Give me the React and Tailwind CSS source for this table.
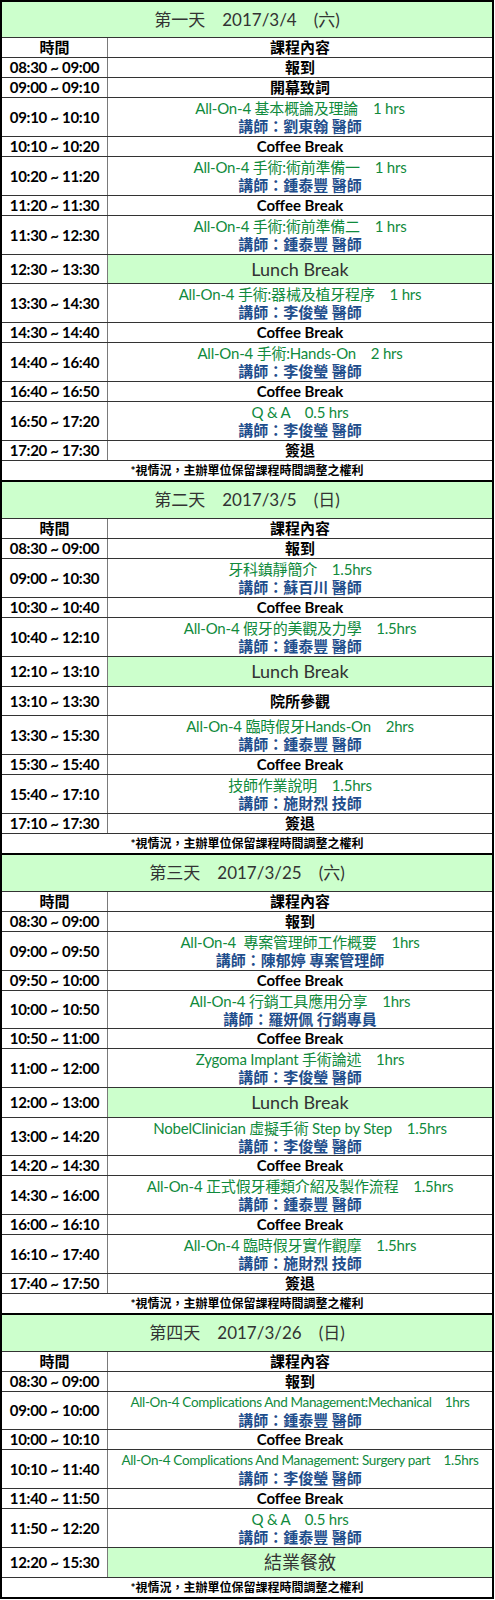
import React from 'react';

const FONT = { fontFamily: 'Lato, "Noto Sans CJK TC", sans-serif' };

const days = [
  {
    title: '第一天　2017/3/4　(六)',
    rows: [
      { time: '08:30 ~ 09:00', kind: 'plain', text: '報到' },
      { time: '09:00 ~ 09:10', kind: 'plain', text: '開幕致詞' },
      { time: '09:10 ~ 10:10', kind: 'course', text: 'All-On-4 基本概論及理論　1 hrs', speaker: '講師：劉東翰 醫師' },
      { time: '10:10 ~ 10:20', kind: 'plain', text: 'Coffee Break' },
      { time: '10:20 ~ 11:20', kind: 'course', text: 'All-On-4 手術:術前準備一　1 hrs', speaker: '講師：鍾泰豐 醫師' },
      { time: '11:20 ~ 11:30', kind: 'plain', text: 'Coffee Break' },
      { time: '11:30 ~ 12:30', kind: 'course', text: 'All-On-4 手術:術前準備二　1 hrs', speaker: '講師：鍾泰豐 醫師' },
      { time: '12:30 ~ 13:30', kind: 'lunch', text: 'Lunch Break', short: true },
      { time: '13:30 ~ 14:30', kind: 'course', text: 'All-On-4 手術:器械及植牙程序　1 hrs', speaker: '講師：李俊瑩 醫師' },
      { time: '14:30 ~ 14:40', kind: 'plain', text: 'Coffee Break' },
      { time: '14:40 ~ 16:40', kind: 'course', text: 'All-On-4 手術:Hands-On　2 hrs', speaker: '講師：李俊瑩 醫師' },
      { time: '16:40 ~ 16:50', kind: 'plain', text: 'Coffee Break' },
      { time: '16:50 ~ 17:20', kind: 'course', text: 'Q & A　0.5 hrs', speaker: '講師：李俊瑩 醫師' },
      { time: '17:20 ~ 17:30', kind: 'plain', text: '簽退' },
    ],
  },
  {
    title: '第二天　2017/3/5　(日)',
    rows: [
      { time: '08:30 ~ 09:00', kind: 'plain', text: '報到' },
      { time: '09:00 ~ 10:30', kind: 'course', text: '牙科鎮靜簡介　1.5hrs', speaker: '講師：蘇百川 醫師' },
      { time: '10:30 ~ 10:40', kind: 'plain', text: 'Coffee Break' },
      { time: '10:40 ~ 12:10', kind: 'course', text: 'All-On-4 假牙的美觀及力學　1.5hrs', speaker: '講師：鍾泰豐 醫師' },
      { time: '12:10 ~ 13:10', kind: 'lunch', text: 'Lunch Break' },
      { time: '13:10 ~ 13:30', kind: 'plain', text: '院所參觀', tall: true },
      { time: '13:30 ~ 15:30', kind: 'course', text: 'All-On-4 臨時假牙Hands-On　2hrs', speaker: '講師：鍾泰豐 醫師' },
      { time: '15:30 ~ 15:40', kind: 'plain', text: 'Coffee Break' },
      { time: '15:40 ~ 17:10', kind: 'course', text: '技師作業說明　1.5hrs', speaker: '講師：施財烈 技師' },
      { time: '17:10 ~ 17:30', kind: 'plain', text: '簽退' },
    ],
  },
  {
    title: '第三天　2017/3/25　(六)',
    rows: [
      { time: '08:30 ~ 09:00', kind: 'plain', text: '報到' },
      { time: '09:00 ~ 09:50', kind: 'course', text: 'All-On-4  專案管理師工作概要　1hrs', speaker: '講師：陳郁婷 專案管理師' },
      { time: '09:50 ~ 10:00', kind: 'plain', text: 'Coffee Break' },
      { time: '10:00 ~ 10:50', kind: 'course', short: true, text: 'All-On-4 行銷工具應用分享　1hrs', speaker: '講師：羅妍佩 行銷專員' },
      { time: '10:50 ~ 11:00', kind: 'plain', text: 'Coffee Break' },
      { time: '11:00 ~ 12:00', kind: 'course', text: 'Zygoma Implant 手術論述　1hrs', speaker: '講師：李俊瑩 醫師' },
      { time: '12:00 ~ 13:00', kind: 'lunch', text: 'Lunch Break' },
      { time: '13:00 ~ 14:20', kind: 'course', short: true, text: 'NobelClinician 虛擬手術 Step by Step　1.5hrs', speaker: '講師：李俊瑩 醫師' },
      { time: '14:20 ~ 14:30', kind: 'plain', text: 'Coffee Break' },
      { time: '14:30 ~ 16:00', kind: 'course', text: 'All-On-4 正式假牙種類介紹及製作流程　1.5hrs', speaker: '講師：鍾泰豐 醫師' },
      { time: '16:00 ~ 16:10', kind: 'plain', text: 'Coffee Break' },
      { time: '16:10 ~ 17:40', kind: 'course', text: 'All-On-4 臨時假牙實作觀摩　1.5hrs', speaker: '講師：施財烈 技師' },
      { time: '17:40 ~ 17:50', kind: 'plain', text: '簽退' },
    ],
  },
  {
    title: '第四天　2017/3/26　(日)',
    rows: [
      { time: '08:30 ~ 09:00', kind: 'plain', text: '報到' },
      { time: '09:00 ~ 10:00', kind: 'course', small: true, short: true, text: 'All-On-4 Complications And Management:Mechanical　1hrs', speaker: '講師：鍾泰豐 醫師' },
      { time: '10:00 ~ 10:10', kind: 'plain', text: 'Coffee Break' },
      { time: '10:10 ~ 11:40', kind: 'course', small: true, text: 'All-On-4 Complications And Management: Surgery part　1.5hrs', speaker: '講師：李俊瑩 醫師' },
      { time: '11:40 ~ 11:50', kind: 'plain', text: 'Coffee Break' },
      { time: '11:50 ~ 12:20', kind: 'course', text: 'Q & A　0.5 hrs', speaker: '講師：鍾泰豐 醫師' },
      { time: '12:20 ~ 15:30', kind: 'lunch', text: '結業餐敘' },
    ],
  },
];

const rowHeight = (row) => {
  if (row.kind === 'course') return row.short ? 'h-[38px]' : 'h-[39px]';
  if (row.kind === 'lunch') return row.short ? 'h-[29px]' : 'h-[30px]';
  if (row.tall) return 'h-[29px]';
  return 'h-[20px]';
};

const Row = ({ row }) => (
  <div className={`flex border-t border-[#333] ${rowHeight(row)}`}>
    <div className="w-[106px] shrink-0 flex items-center justify-center border-r border-[#7a7a7a] text-[15px] font-bold text-black tracking-[-0.3px]">
      {row.time}
    </div>
    {row.kind === 'plain' && (
      <div className="flex-1 flex items-center justify-center text-[15px] font-bold text-black">
        {row.text}
      </div>
    )}
    {row.kind === 'lunch' && (
      <div className="flex-1 flex items-center justify-center bg-[#ccffcc] text-[18px] text-[#333]">
        {row.text}
      </div>
    )}
    {row.kind === 'course' && (
      <div className="flex-1 flex flex-col items-center justify-center leading-[18px] whitespace-pre">
        <div
          className={
            row.small
              ? 'text-[13.5px] tracking-[-0.35px] text-[#108a3c]'
              : 'text-[15px] tracking-[-0.2px] text-[#108a3c]'
          }
        >
          {row.text}
        </div>
        <div className="text-[15px] font-bold text-[#1f4e8c]">{row.speaker}</div>
      </div>
    )}
  </div>
);

const Day = ({ day, first }) => (
  <div className={first ? '' : 'border-t-2 border-black'}>
    <div
      className={`${first ? 'h-[35px]' : 'h-[36px]'} flex items-center justify-center bg-[#ccffcc] text-[17px] text-[#333] whitespace-pre`}
    >
      {day.title}
    </div>
    <div className="flex border-t border-[#333] h-[20px]">
      <div className="w-[106px] shrink-0 flex items-center justify-center border-r border-[#7a7a7a] text-[15px] font-bold">
        時間
      </div>
      <div className="flex-1 flex items-center justify-center text-[15px] font-bold">課程內容</div>
    </div>
    {day.rows.map((row, i) => (
      <Row key={i} row={row} />
    ))}
    <div className="h-[20px] flex items-center justify-center border-t border-[#333] text-[12px] font-bold text-black">
      *視情況，主辦單位保留課程時間調整之權利
    </div>
  </div>
);

export default function App() {
  return (
    <div className="bg-white w-[495px] min-h-[1600px]" style={FONT}>
      <div className="w-[494px] border-2 border-black">
        {days.map((day, i) => (
          <Day key={i} day={day} first={i === 0} />
        ))}
      </div>
    </div>
  );
}
